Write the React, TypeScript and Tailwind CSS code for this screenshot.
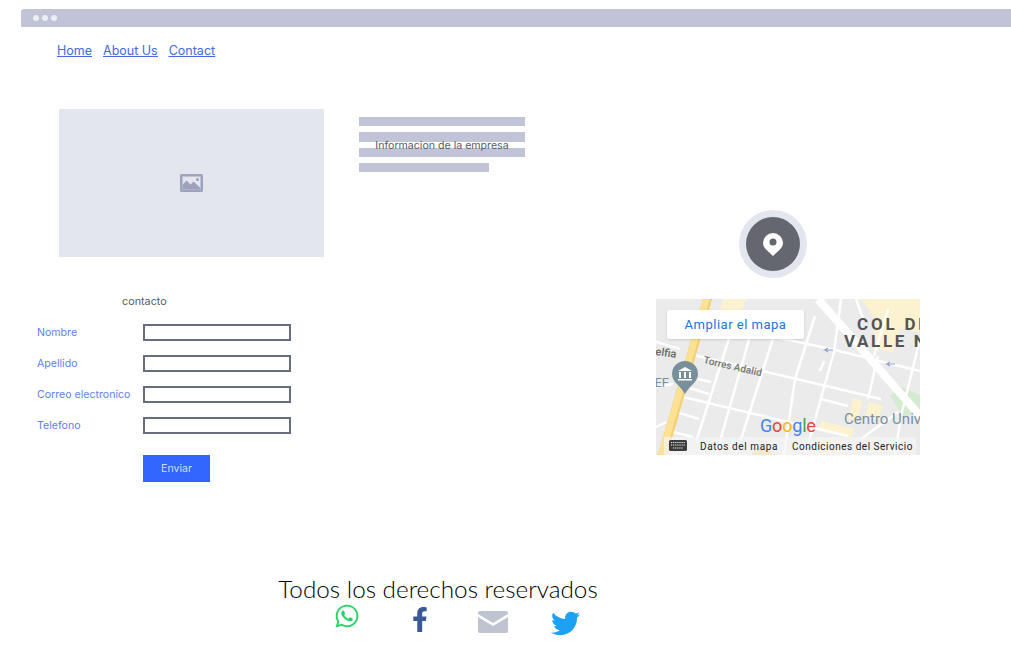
import { FaFacebookF, FaTwitter, FaWhatsapp } from "react-icons/fa";

const fields = ["Nombre", "Apellido", "Correo electronico", "Telefono"];

// streets of the map picture, as x1 y1 x2 y2
const streets = [
  [30, 19, 175, 50],
  [175, 50, 264, 72],
  [33, 55, 132, 78],
  [132, 78, 225, 100],
  [27, 98, 132, 123],
  [132, 123, 192, 137],
  [165, 100, 192, 107],
  [0, 43, 24, 50],
  [33, 78, 55, 83],
  [30, 88, 53, 95],
  [20, 113, 43, 120],
  [13, 132, 37, 138],
  [0, 88, 17, 85],
  [0, 128, 10, 123],
  [76, 30, 40, 143],
  [96, 30, 60, 156],
  [120, 30, 80, 156],
  [159, 17, 139, 80],
  [139, 80, 128, 156],
  [185, 0, 178, 53],
  [178, 53, 149, 156],
  [232, 10, 218, 57],
  [222, 57, 212, 100],
  [264, 40, 245, 117],
  [245, 117, 239, 156],
  [205, 140, 242, 113],
  [200, 0, 208, 22],
  [168, 62, 164, 72],
];

function MapPicture() {
  return (
    <svg viewBox="0 0 264 156" className="block w-[264px] h-[156px]">
      <rect width="264" height="156" fill="#ebebeb" />
      <path d="M205 0h59v34l-20-5-8 24-20-5 5-26zM68 0h22l-5 14H63z" fill="#fdf2cf" />
      <path d="M165 122l33 8-3 9-33-8zM197 99l9 2-4 20-9-2zM213 103l14 4-5 14-13-3zM160 138l28 6-3 12h-28z" fill="#fdf2cf" />
      <path d="M234 97l12-9 18 8v16l-16 6z" fill="#d5ebd0" />
      {streets.map(([x1, y1, x2, y2], i) => (
        <line key={i} x1={x1} y1={y1} x2={x2} y2={y2} stroke="#ffffff" strokeWidth="2.500" />
      ))}
      <line x1="162" y1="0" x2="266" y2="119" stroke="#ffffff" strokeWidth="8" />
      <line x1="52" y1="-2" x2="6" y2="158" stroke="#f6cf75" strokeWidth="9" />
      <line x1="51" y1="-2" x2="5" y2="158" stroke="#fde293" strokeWidth="6.500" />
      <path d="M96 156a10 8 0 0 1 20 0z" fill="#f8c777" />
      <path d="M29 62a13 13 0 0 1 13 13c0 8-8 11-13 20-5-9-13-12-13-20a13 13 0 0 1 13-13z" fill="#78909c" />
      <path d="M22 72l7-4 7 4zM23 73h2v6h-2zM28 73h2v6h-2zM33 73h2v6h-2zM22 80h14v1.500H22z" fill="#ffffff" />
      <path d="M177 51h-8l3-2m-3 2l3 2M239 65h-8l3-2m-3 2l3 2" stroke="#8c9fd0" strokeWidth="1.200" fill="none" />
      <text x="47" y="64" transform="rotate(13 47 64)" fontSize="10" fontWeight="500" fill="#757575" fontFamily="Roboto, sans-serif">Torres Adalid</text>
      <text x="-8" y="55" transform="rotate(8 -8 55)" fontSize="11" fontWeight="500" fill="#666666" fontFamily="Roboto, sans-serif">Delfia</text>
      <text x="-10" y="88" fontSize="13" fill="#78909c" fontFamily="Roboto, sans-serif">UEF</text>
      <text x="201" y="31" fontSize="17" fontWeight="700" letterSpacing="2.800" fill="#555555" fontFamily="Roboto, sans-serif">COL DEL</text>
      <text x="188" y="48" fontSize="17" fontWeight="700" letterSpacing="2.600" fill="#555555" fontFamily="Roboto, sans-serif">VALLE NORTE</text>
      <text x="188" y="125" fontSize="15" fill="#78909c" fontFamily="Roboto, sans-serif">Centro Universitario</text>
      <text x="104" y="133" fontSize="18" letterSpacing="-0.200" fontFamily="Roboto, sans-serif">
        <tspan fill="#4285f4">G</tspan>
        <tspan fill="#ea4335">o</tspan>
        <tspan fill="#fbbc05">o</tspan>
        <tspan fill="#4285f4">g</tspan>
        <tspan fill="#34a853">l</tspan>
        <tspan fill="#ea4335">e</tspan>
      </text>
    </svg>
  );
}

export default function App() {
  return (
    <div className="w-[1011px] h-[660px] overflow-hidden bg-white font-['Inter',sans-serif]">
      <div className="ml-[21px] mt-[9px] h-[18px] rounded-tl-[3px] bg-[#c0c4d6] flex items-center gap-[3px] pl-[12px]">
        <span className="w-[6px] h-[6px] rounded-full bg-[#eceef4]" />
        <span className="w-[6px] h-[6px] rounded-full bg-[#eceef4]" />
        <span className="w-[6px] h-[6px] rounded-full bg-[#eceef4]" />
      </div>

      <nav className="ml-[57px] mt-[15px] h-[17px] flex gap-[11px] text-[12.5px] leading-[17px] text-[#4468e0] underline">
        <a href="#">Home</a>
        <a href="#">About Us</a>
        <a href="#">Contact</a>
      </nav>

      <div className="mt-[50px] flex h-[373px]">
        <div className="w-[359px] shrink-0">
          <div className="ml-[59px] w-[265px] h-[148px] bg-[#e3e6ee] flex items-center justify-center">
            <svg viewBox="0 0 23 18" className="w-[23px] h-[18px]">
              <rect width="23" height="18" rx="1.500" fill="#9ea3bd" />
              <rect x="2.500" y="2.500" width="18" height="13" fill="#e3e6ee" />
              <path d="M2.500 15.500V11l4-4.500 4 4 3-3 7 6.500v1.500z" fill="#9ea3bd" />
              <circle cx="17.500" cy="5.500" r="1.500" fill="#9ea3bd" />
            </svg>
          </div>

          <p className="ml-[122px] mt-[38px] text-[10.8px] leading-[14px] text-[#595b68]">contacto</p>

          <form className="ml-[37px] mt-[15px] w-[254px] flex flex-col gap-[14px]">
            {fields.map((label) => (
              <label key={label} className="flex items-center h-[17px] text-[10.6px] text-[#5f80f5]">
                <span className="w-[106px] shrink-0">{label}</span>
                <input type="text" className="w-[148px] h-[17px] border-2 border-[#696b7e] bg-white" />
              </label>
            ))}
            <button type="button" className="ml-[106px] mt-[7px] w-[67px] h-[27px] bg-[#3366ff] text-[10.6px] text-[#cfdafb]">
              Enviar
            </button>
          </form>
        </div>

        <div className="w-[297px] shrink-0">
          <div className="relative w-[166px] mt-[8px] flex flex-col gap-[6px]">
            <div className="h-[9px] bg-[#c0c4d6]" />
            <div className="h-[10px] bg-[#c0c4d6]" />
            <div className="h-[9px] bg-[#c0c4d6]" />
            <div className="h-[9px] w-[130px] bg-[#c0c4d6]" />
            <span className="absolute left-0 right-0 top-[22px] text-center text-[10.6px] leading-[14px] text-[#595b68]">
              Informacion de la empresa
            </span>
          </div>
        </div>

        <div className="w-[264px] shrink-0">
          <div className="mt-[101px] ml-[83px] w-[68px] h-[68px] rounded-full bg-[#e3e6ee] flex items-center justify-center">
            <div className="w-[54px] h-[54px] rounded-full bg-[#646770] flex items-center justify-center">
              <svg viewBox="0 0 20 24" className="w-[20px] h-[24px]">
                <path d="M10 1a10 10 0 0 1 10 10c0 5-5 8-10 13C5 19 0 16 0 11A10 10 0 0 1 10 1z" fill="#ffffff" />
                <circle cx="10" cy="10" r="3.500" fill="#646770" />
              </svg>
            </div>
          </div>

          <div className="relative mt-[21px] w-[264px] h-[156px] overflow-hidden">
            <MapPicture />
            <div className="absolute left-[11px] top-[11px] w-[137px] h-[29px] bg-white rounded-[2px] shadow-sm flex items-center justify-center text-[13px] tracking-[0.5px] text-[#1a73e8] font-['Roboto',sans-serif]">
              Ampliar el mapa
            </div>
            <div className="absolute left-[8px] right-[4px] bottom-0 h-[18px] bg-[#f5f5f5]/70 flex items-center text-[10px] text-[#222222] font-['Roboto',sans-serif]">
              <svg viewBox="0 0 18 12" className="ml-[5px] w-[18px] h-[12px]">
                <rect width="18" height="11" rx="1.500" fill="#3c3c3c" />
                <path d="M2 2.500h14M2 5h14M4 8h10" stroke="#f5f5f5" strokeWidth="1" strokeDasharray="1.200 0.900" />
              </svg>
              <span className="ml-[13px] tracking-[0.6px]">Datos del mapa</span>
              <span className="ml-[14px] tracking-[0.5px]">Condiciones del Servicio</span>
            </div>
          </div>
        </div>
      </div>

      <footer className="mt-[92px] w-[876px] text-center text-[24.3px] leading-[30px] font-light text-black font-['Lato',sans-serif]">
        Todos los derechos reservados
      </footer>

      <div className="ml-[334px] flex items-start h-[36px]">
        <FaWhatsapp className="-mt-[1px] w-[26px] h-[26px] text-[#25d366]" />
        <FaFacebookF className="ml-[52px] mt-[3px] w-[16px] h-[25px] text-[#3b5998]" />
        <svg viewBox="0 0 30 22" className="ml-[50px] mt-[7px] w-[30px] h-[22px]">
          <path d="M2 0h26a2 2 0 0 1 2 2v1L15 12 0 3V2a2 2 0 0 1 2-2z" fill="#c0c4d0" />
          <path d="M0 6l15 9 15-9v14a2 2 0 0 1-2 2H2a2 2 0 0 1-2-2z" fill="#c0c4d0" />
        </svg>
        <FaTwitter className="ml-[43px] mt-[5px] w-[29px] h-[29px] text-[#1da1f2]" />
      </div>
    </div>
  );
}
